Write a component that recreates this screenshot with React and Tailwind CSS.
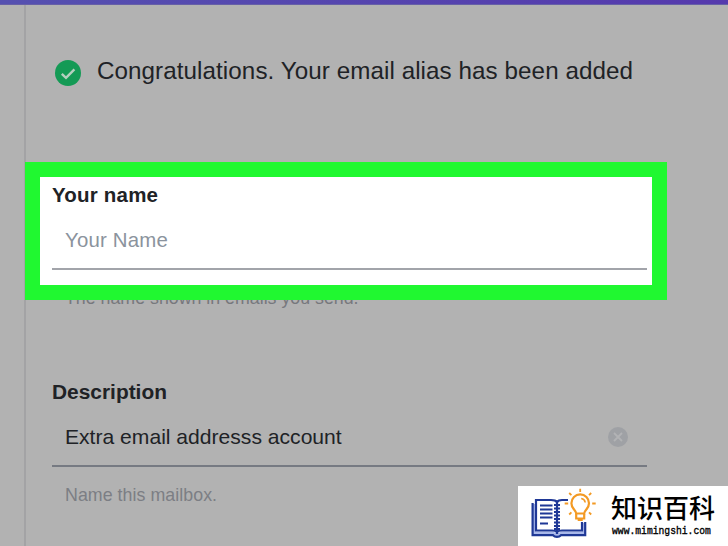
function CheckBadge() {
  return (
    <svg className="h-[26px] w-[26px] shrink-0" viewBox="0 0 26 26" fill="none">
      <circle cx="13" cy="13" r="13" fill="#149a55" />
      <path d="M6.800 13.800 11 17.800 19.400 9.400" stroke="#b5cfbf" strokeWidth="2.400" />
    </svg>
  );
}

function ClearIcon() {
  return (
    <svg className="h-5 w-5 shrink-0" viewBox="0 0 20 20" fill="none">
      <circle cx="10" cy="10" r="10" fill="#9fa1a5" />
      <path d="M6 6 14 14M14 6 6 14" stroke="#b2b3b5" strokeWidth="1.800" />
    </svg>
  );
}

function BookLogo() {
  return (
    <svg className="h-[52px] w-[68px] shrink-0" viewBox="0 0 68 52" fill="none">
      <path d="M4 16V45H22L27 47L32 45H54V35" stroke="#a9b8ea" strokeWidth="3" />
      <g stroke="#1f3896" strokeWidth="2.200">
        <path d="M38 12H32Q28.500 12 27 14Q25.500 12 21 12H6V42.500H22Q25.500 42.500 27 44Q28.500 42.500 32 42.500H52V34" />
        <path d="M2.600 15V47.200H23Q24.500 48.800 27 48.800Q29.500 48.800 31 47.200H55.200V34" />
        <path d="M10 17.500H22.500M10 21.500H22.500M10 25.500H22.500M10 29.500H22.500M10 35.500H18" strokeWidth="2" />
        <path d="M27 14V46" />
        <path d="M24 17H30M24 20.500H30M24 24H30M24 27.500H30M24 31H30M24 34.500H30M24 38H30M24 41H30" strokeWidth="1.800" />
      </g>
      <g transform="translate(1.200 -1)" stroke="#f39a24" strokeWidth="2.200">
        <path d="M45 26.500C45 23 40.200 22 40.200 16.200A8.800 8.800 0 0 1 57.800 16.200C57.800 22 53 23 53 26.500Z" />
        <path d="M45 27V31.500H53V27M46.500 33H51.500" />
        <path d="M50 11.500Q53.500 12 54 15.500" strokeWidth="1.600" />
        <path d="M49 1.800V5M38 6 40.200 8.200M60 6 57.800 8.200M33.500 16.500H37M61 16.500H64.500M38 27.500 40.200 25.300M60 27.500 57.800 25.300" strokeWidth="1.800" />
      </g>
    </svg>
  );
}

function Watermark() {
  return (
    <div className="absolute top-[486px] left-[518px] flex h-[60px] w-[210px] bg-white pt-[2px] pl-[12px]">
      <BookLogo />
      <div className="ml-[13px] flex flex-col whitespace-nowrap text-black">
        <span className="mt-[4px] font-['Noto_Sans_CJK_SC',sans-serif] text-[26px] leading-[30px] font-medium">知识百科</span>
        <span className="mt-[3px] origin-center scale-y-115 pl-[1px] font-['Liberation_Mono',monospace] text-[9.700px] leading-[14px] [-webkit-text-stroke:0.3px_black]">www.mimingshi.com</span>
      </div>
    </div>
  );
}

export default function App() {
  return (
    <div className="relative flex h-[546px] w-[728px] flex-col overflow-hidden bg-[#b2b2b2] font-['Liberation_Sans',Arial,sans-serif] whitespace-nowrap text-[#202226]">
      <header className="h-[5px] shrink-0 border-b border-[#665fa7] bg-linear-to-r from-[#5550b0] to-[#5539ad]" />
      <div className="flex flex-1">
        <aside className="w-[26px] shrink-0 border-r-2 border-[#a3a3a5]" />
        <main className="-ml-px flex flex-1 flex-col">
          <div className="mt-[51px] ml-[30px] flex h-[30px] items-center gap-4">
            <div className="pt-[3px]"><CheckBadge /></div>
            <p className="text-[24.2px] leading-[30px] tracking-[0.075px]">Congratulations. Your email alias has been added</p>
          </div>

          <section className="relative mt-[76px] h-[138px] w-[642px] border-[15px] border-[#20f830] bg-white pt-[5px] pr-[5px] pl-[12px]">
            <h2 className="text-[20.5px] leading-[26px] font-bold tracking-[0.2px]">Your name</h2>
            <div className="mt-[11px] h-[51px] border-b-2 border-[#a2a4aa] pt-[8px] pl-[13px] text-[20.4px] leading-[26px] tracking-[0.2px] text-[#8b939d]">
              Your Name
            </div>
          </section>
          <p className="-mt-[14px] h-[24px] pl-[40px] text-[17.8px] leading-[24px] text-[#77787d]">The name shown in emails you send.</p>

          <section className="mt-[69px] ml-[27px] w-[595px]">
            <h2 className="text-[20.9px] leading-[26px] font-bold">Description</h2>
            <div className="mt-[10px] flex h-[52px] justify-between border-b-2 border-[#767a82] pt-[9px] pr-[19px] pl-[13px]">
              <span className="text-[21.1px] leading-[26px]">Extra email addresss account</span>
              <span className="pt-[3px]"><ClearIcon /></span>
            </div>
            <p className="mt-[16px] pl-[13px] text-[17.8px] leading-[24px] tracking-[0.05px] text-[#7c7e84]">Name this mailbox.</p>
          </section>
        </main>
      </div>
      <Watermark />
    </div>
  );
}
